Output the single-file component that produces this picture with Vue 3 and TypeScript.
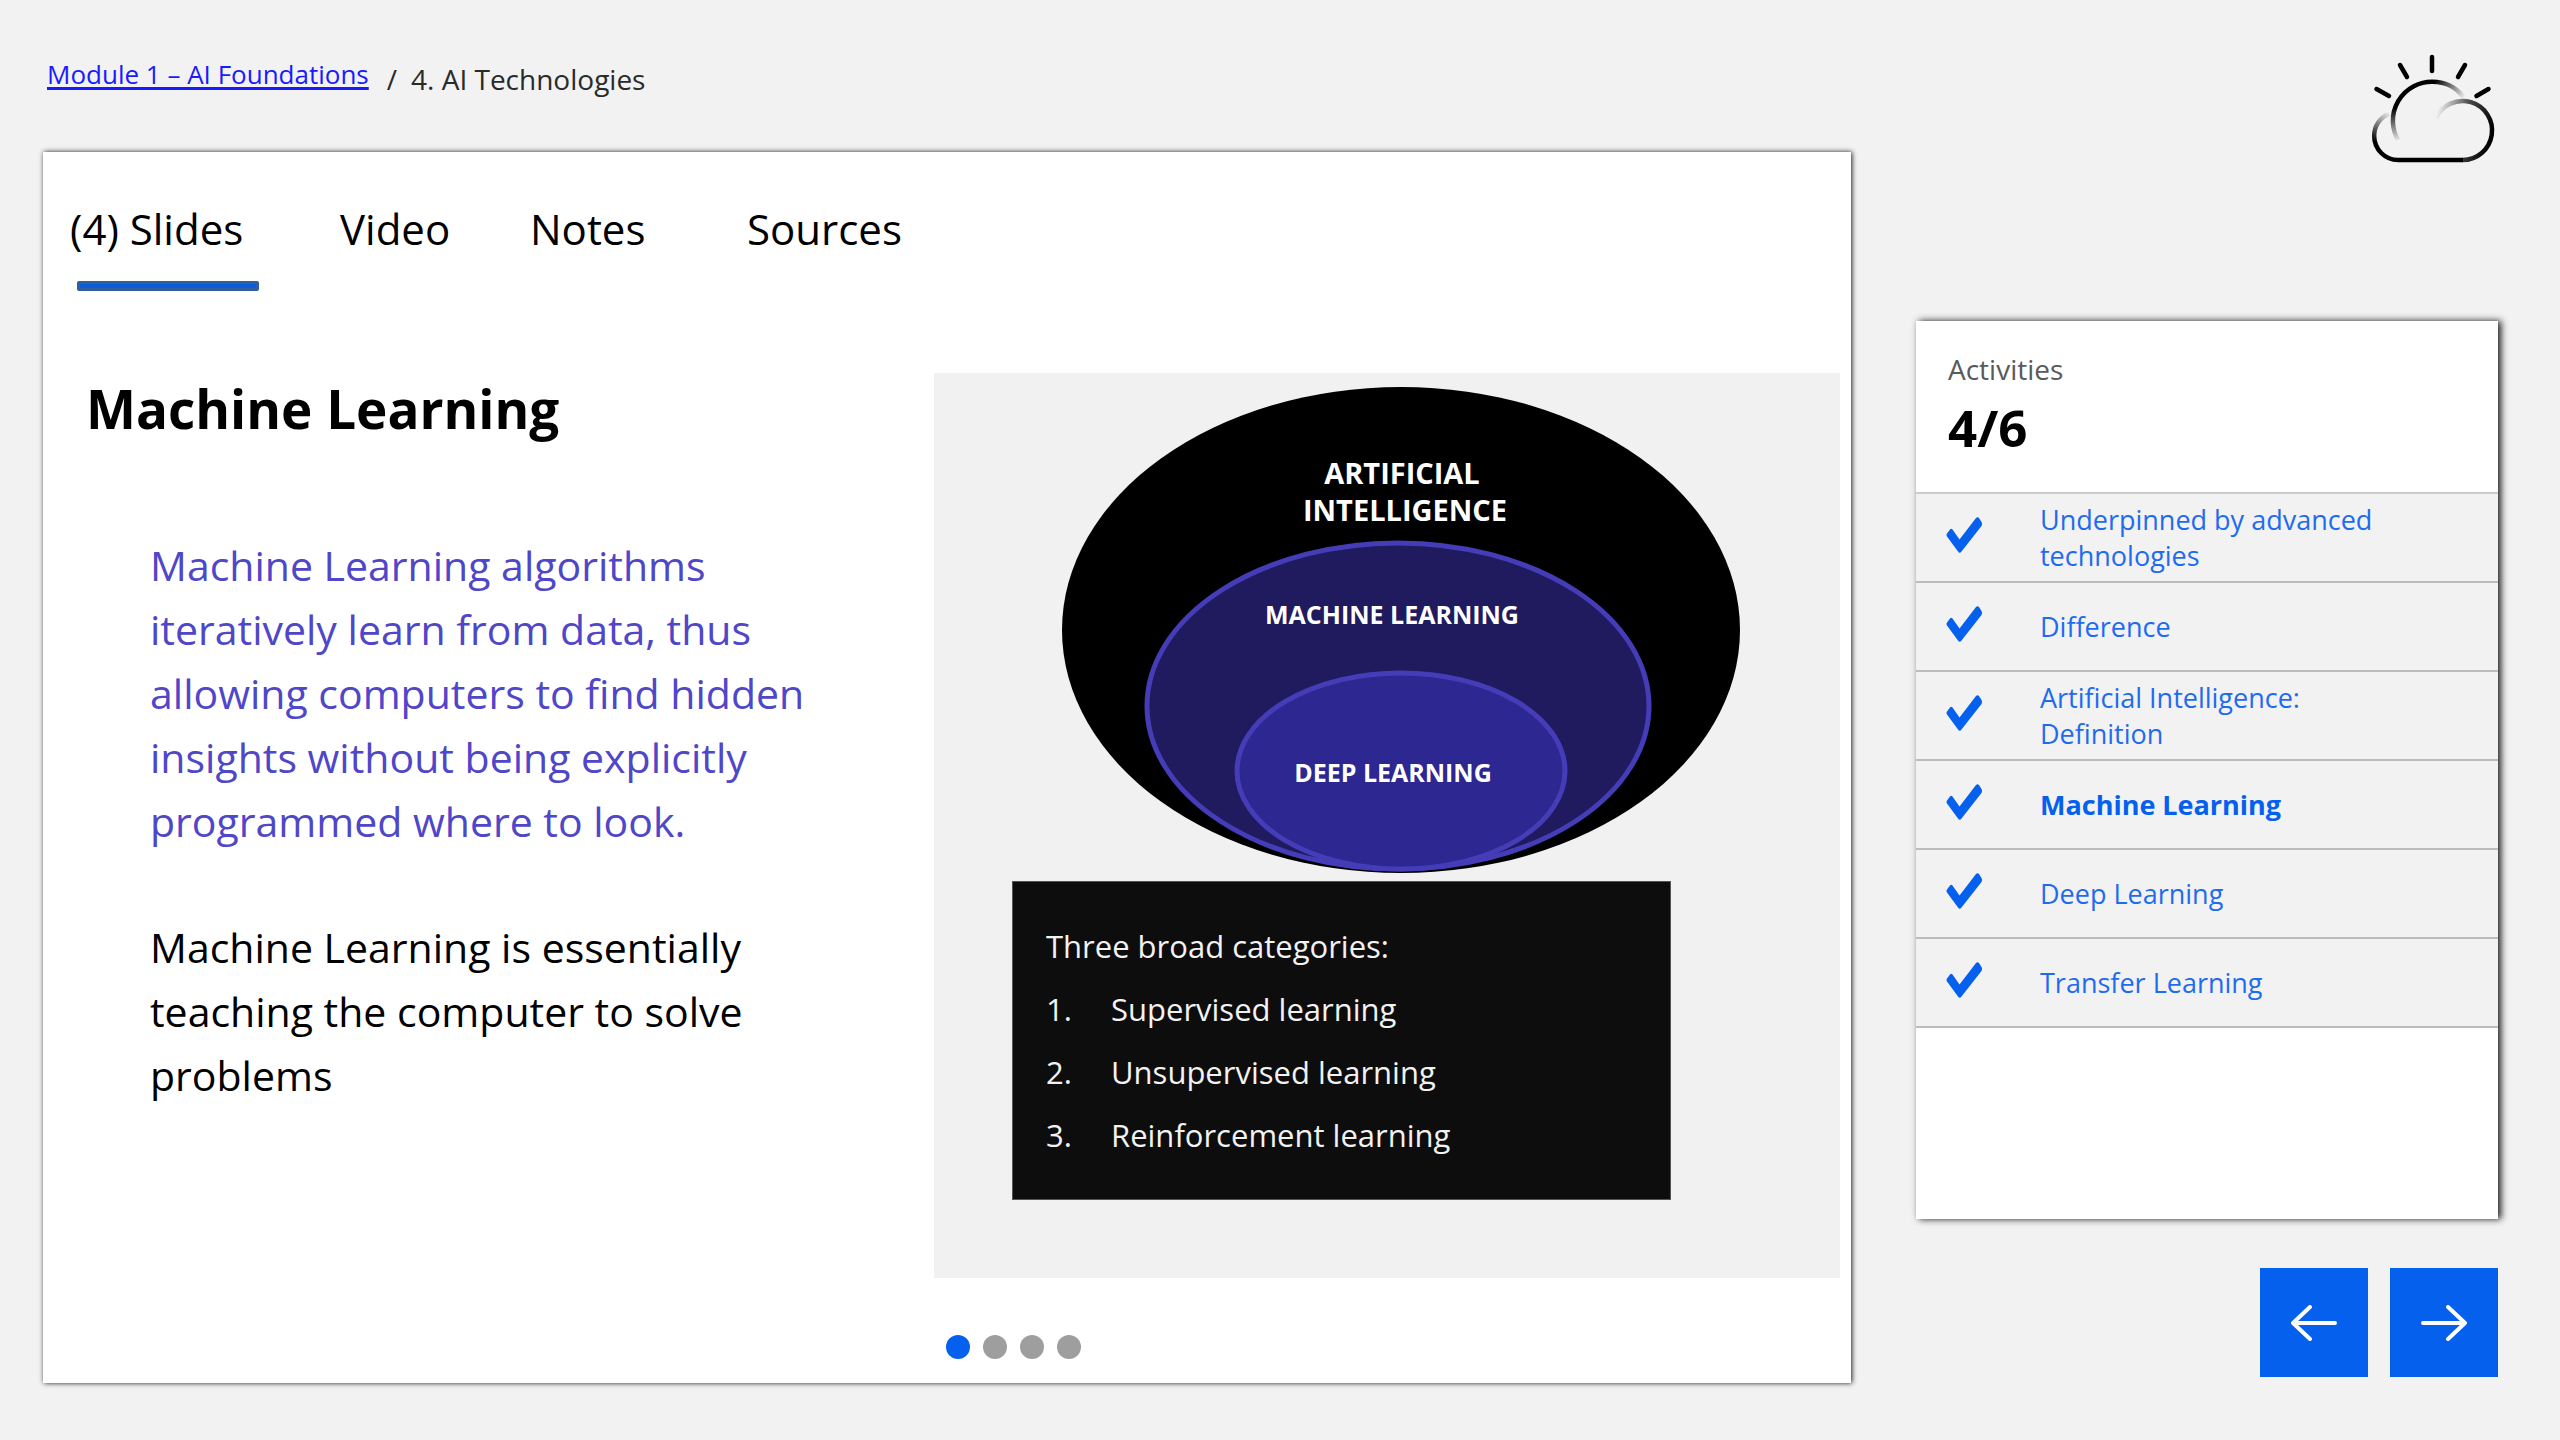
<script setup lang="ts">
import { ref } from 'vue'

interface Activity {
  title: string
  current?: boolean
}

const tabs: string[] = ['(4) Slides', 'Video', 'Notes', 'Sources']
const activeTab = ref(0)

const slideCount = 4
const slide = ref(1)

const activities: Activity[] = [
  { title: 'Underpinned by advanced technologies' },
  { title: 'Difference' },
  { title: 'Artificial Intelligence: Definition' },
  { title: 'Machine Learning', current: true },
  { title: 'Deep Learning' },
  { title: 'Transfer Learning' },
]

const categories: string[] = ['Supervised learning', 'Unsupervised learning', 'Reinforcement learning']
</script>

<template>
  <div class="page">
    <main class="lesson">
      <nav class="crumbs" aria-label="Breadcrumb">
        <a class="crumb-link" href="#module-1">Module 1 – AI Foundations</a>
        <span class="crumb-sep">/</span>
        <span class="crumb-here">4. AI Technologies</span>
      </nav>

      <section class="card">
        <div class="tabs" role="tablist">
          <button
            v-for="(tab, i) in tabs"
            :key="tab"
            type="button"
            role="tab"
            class="tab"
            :class="{ active: activeTab === i }"
            :aria-selected="activeTab === i"
            @click="activeTab = i"
          >{{ tab }}</button>
        </div>

        <div class="slide">
          <div class="copy">
            <h1>Machine Learning</h1>
            <p class="lead">Machine Learning algorithms iteratively learn from data, thus allowing computers to find hidden insights without being explicitly programmed where to look.</p>
            <p>Machine Learning is essentially teaching the computer to solve problems</p>
          </div>

          <div class="figure">
            <svg class="venn" viewBox="0 0 678 488" role="img" aria-label="Deep learning within machine learning within artificial intelligence">
              <ellipse cx="339" cy="244" rx="339" ry="243" fill="#000" />
              <ellipse cx="336" cy="320" rx="251" ry="163" fill="#201a5e" stroke="#453cb8" stroke-width="5" />
              <ellipse cx="339" cy="385" rx="164" ry="98" fill="#2d2791" stroke="#453cb8" stroke-width="5" />
              <g class="venn-text">
                <text class="big" x="340" y="98">ARTIFICIAL</text>
                <text class="big" x="343" y="135">INTELLIGENCE</text>
                <text x="330" y="238">MACHINE LEARNING</text>
                <text x="331" y="396">DEEP LEARNING</text>
              </g>
            </svg>
            <div class="categories">
              <p>Three broad categories:</p>
              <ol>
                <li v-for="(c, i) in categories" :key="c"><span class="num">{{ i + 1 }}.</span>{{ c }}</li>
              </ol>
            </div>
          </div>
        </div>

        <div class="dots">
          <button
            v-for="n in slideCount"
            :key="n"
            type="button"
            class="dot"
            :class="{ on: slide === n }"
            :aria-label="`Slide ${n}`"
            @click="slide = n"
          ></button>
        </div>
      </section>
    </main>

    <aside class="side">
      <svg class="weather" viewBox="0 0 132 118" fill="none" stroke="#000" stroke-width="4.500" stroke-linecap="round" aria-hidden="true">
        <defs>
          <linearGradient id="puffLeft" gradientUnits="userSpaceOnUse" x1="24" y1="62" x2="10" y2="92">
            <stop offset="0" stop-color="#000" stop-opacity="0" />
            <stop offset="1" stop-color="#000" />
          </linearGradient>
          <linearGradient id="puffRight" gradientUnits="userSpaceOnUse" x1="69" y1="70" x2="126" y2="84">
            <stop offset="0" stop-color="#000" stop-opacity="0" />
            <stop offset="0.5" stop-color="#000" stop-opacity="0.7" />
            <stop offset="1" stop-color="#000" />
          </linearGradient>
          <linearGradient id="sunLeft" gradientUnits="userSpaceOnUse" x1="33" y1="92" x2="30" y2="58">
            <stop offset="0" stop-color="#000" stop-opacity="0" />
            <stop offset="1" stop-color="#000" />
          </linearGradient>
          <linearGradient id="sunRight" gradientUnits="userSpaceOnUse" x1="99" y1="48" x2="68" y2="33">
            <stop offset="0" stop-color="#000" stop-opacity="0" />
            <stop offset="1" stop-color="#000" />
          </linearGradient>
        </defs>
        <path d="M66 7V21M34 15L41 27M99 15L92 27M10.500 39L23 46M122.500 39L110.500 46" />
        <g stroke-linecap="butt">
          <path d="M32 90A39 39 0 0 1 66 31.700" stroke="url(#sunLeft)" />
          <path d="M66 31.700A39 39 0 0 1 97.500 47" stroke="url(#sunRight)" />
          <path d="M23 63.700A24 24 0 0 0 8.200 86A24 24 0 0 0 32.200 110" stroke="url(#puffLeft)" />
          <path d="M32 110H97" />
          <path d="M96.300 110A29.500 29.500 0 1 0 69.700 68.300" stroke="url(#puffRight)" />
        </g>
      </svg>

      <section class="panel">
        <header class="panel-head">
          <h2>Activities</h2>
          <p class="count">4/6</p>
        </header>
        <ul class="activities">
          <li v-for="a in activities" :key="a.title">
            <svg class="tick" viewBox="0 0 36 36" aria-hidden="true">
              <path d="M1 16.500L4 12.500Q5 11 6.500 12.500L13.500 22.500L30 1Q31.500-.5 33 1L35.500 5Q36.500 7 35.500 9L15.500 34.500Q13.700 37 12 34.500L1 19.500Q0 18 1 16.500Z" fill="#0560ee" />
            </svg>
            <a href="#activity" :class="{ current: a.current }">{{ a.title }}</a>
          </li>
        </ul>
      </section>

      <div class="pager">
        <button type="button" aria-label="Previous">
          <svg viewBox="0 0 46 36" aria-hidden="true"><path d="M44 18H3M19 2L2 18L19 34" /></svg>
        </button>
        <button type="button" aria-label="Next">
          <svg viewBox="0 0 46 36" aria-hidden="true"><path d="M2 18H43M27 2L44 18L27 34" /></svg>
        </button>
      </div>
    </aside>
  </div>
</template>

<style>
body {
  margin: 0;
  background: #f2f2f2;
}
</style>

<style scoped>
.page {
  display: grid;
  grid-template-columns: minmax(0, 1fr) 582px;
  column-gap: 65px;
  min-height: 100vh;
  box-sizing: border-box;
  padding: 50px 62px 57px 43px;
  background: #f2f2f2;
  color: #000;
  font-family: "Open Sans", "Noto Sans", sans-serif;
  font-size: 28px;
  line-height: 36px;
}

h1, h2, p, ul, ol {
  margin: 0;
  padding: 0;
}

ul, ol {
  list-style: none;
}

button {
  margin: 0;
  padding: 0;
  border: 0;
  background: none;
  color: inherit;
  font: inherit;
  cursor: pointer;
}

.lesson {
  display: flex;
  flex-direction: column;
}

/* breadcrumb */
.crumbs {
  display: flex;
  align-items: flex-end;
  padding: 6px 4px 55px;
  color: #2a2a2a;
}

.crumb-link {
  padding-bottom: 5px;
  color: #1a1aff;
  font-size: 26px;
  text-decoration-thickness: 3px;
  text-underline-offset: 3px;
}

.crumb-sep {
  margin: 0 14px 0 18px;
}

/* slide card */
.card {
  display: flex;
  flex: 1;
  flex-direction: column;
  background: #fff;
  box-shadow: 1px 0 5px rgba(0, 0, 0, 0.9);
}

.tabs {
  display: grid;
  grid-template-columns: 270px 190px 217px auto;
  justify-content: start;
  padding: 49px 27px 0;
  font-size: 42px;
  line-height: 56px;
}

.tab {
  position: relative;
  justify-self: start;
  padding-bottom: 34px;
}

.tab.active::after {
  content: "";
  position: absolute;
  right: -16px;
  bottom: 0;
  left: 7px;
  box-sizing: border-box;
  height: 10px;
  border: 3px solid #2f5f9f;
  border-radius: 2px;
  background: #0b5cd8;
}

.slide {
  display: flex;
  justify-content: space-between;
  padding: 82px 11px 0 43px;
}

.copy {
  width: 740px;
  padding-top: 4px;
  font-size: 41px;
  line-height: 64px;
}

h1 {
  margin-bottom: 92px;
  font-size: 53px;
  line-height: 64px;
}

.copy p {
  padding: 0 10px 0 64px;
}

.copy .lead {
  margin-bottom: 62px;
  color: #4f46c8;
}

.figure {
  display: flex;
  flex-direction: column;
  box-sizing: border-box;
  width: 906px;
  padding: 13px 78px 78px;
  background: #f1f1f1;
}

.venn {
  display: block;
  align-self: flex-end;
  width: 678px;
  margin-right: 22px;
}

.venn-text text {
  fill: #fff;
  font-size: 25px;
  font-weight: 700;
  text-anchor: middle;
}

.venn-text .big {
  font-size: 29px;
}

.categories {
  box-sizing: border-box;
  width: 659px;
  margin-top: 7px;
  padding: 41px 33px;
  border: 1px solid #555;
  background: #0d0d0d;
  color: #f2f2f2;
  font-size: 31px;
  line-height: 46px;
}

.categories li {
  display: flex;
  margin-top: 17px;
}

.num {
  width: 65px;
}

.dots {
  display: flex;
  gap: 13px;
  padding: 57px 903px 23px;
}

.dot {
  width: 24px;
  height: 24px;
  flex: none;
  border-radius: 50%;
  background: #9e9e9e;
}

.dot.on {
  background: #0560ee;
}

/* sidebar */
.side {
  display: flex;
  flex-direction: column;
}

.weather {
  align-self: flex-end;
  width: 132px;
  height: 118px;
}

.panel {
  flex: 1;
  margin-top: 153px;
  background: #fff;
  box-shadow: 3px 0 7px rgba(0, 0, 0, 0.9);
}

.panel-head {
  box-sizing: border-box;
  min-height: 173px;
  padding: 30px 32px 0;
  border-bottom: 2px solid #ccc;
}

h2 {
  color: #5a5a5a;
  font-size: 28px;
  font-weight: 400;
}

.count {
  margin-top: 12px;
  font-size: 51px;
  font-weight: 700;
  line-height: 56px;
}

.activities li {
  display: flex;
  align-items: center;
  gap: 58px;
  box-sizing: border-box;
  min-height: 89px;
  padding: 0 100px 0 30px;
  border-bottom: 2px solid #bcbcbc;
  background: #f2f2f2;
  font-size: 27px;
}

.tick {
  flex: none;
  width: 36px;
  height: 36px;
  margin-bottom: 6px;
}

.activities a {
  color: #1f6bf0;
  text-decoration: none;
}

.activities a.current {
  color: #0560ee;
  font-weight: 700;
}

.pager {
  display: flex;
  justify-content: flex-end;
  gap: 22px;
  padding: 49px 0 6px;
}

.pager button {
  display: flex;
  align-items: center;
  justify-content: center;
  width: 108px;
  height: 109px;
  background: #0560ee;
}

.pager svg {
  width: 46px;
  height: 36px;
  fill: none;
  stroke: #fff;
  stroke-width: 4;
  stroke-linecap: round;
  stroke-linejoin: round;
}
</style>
